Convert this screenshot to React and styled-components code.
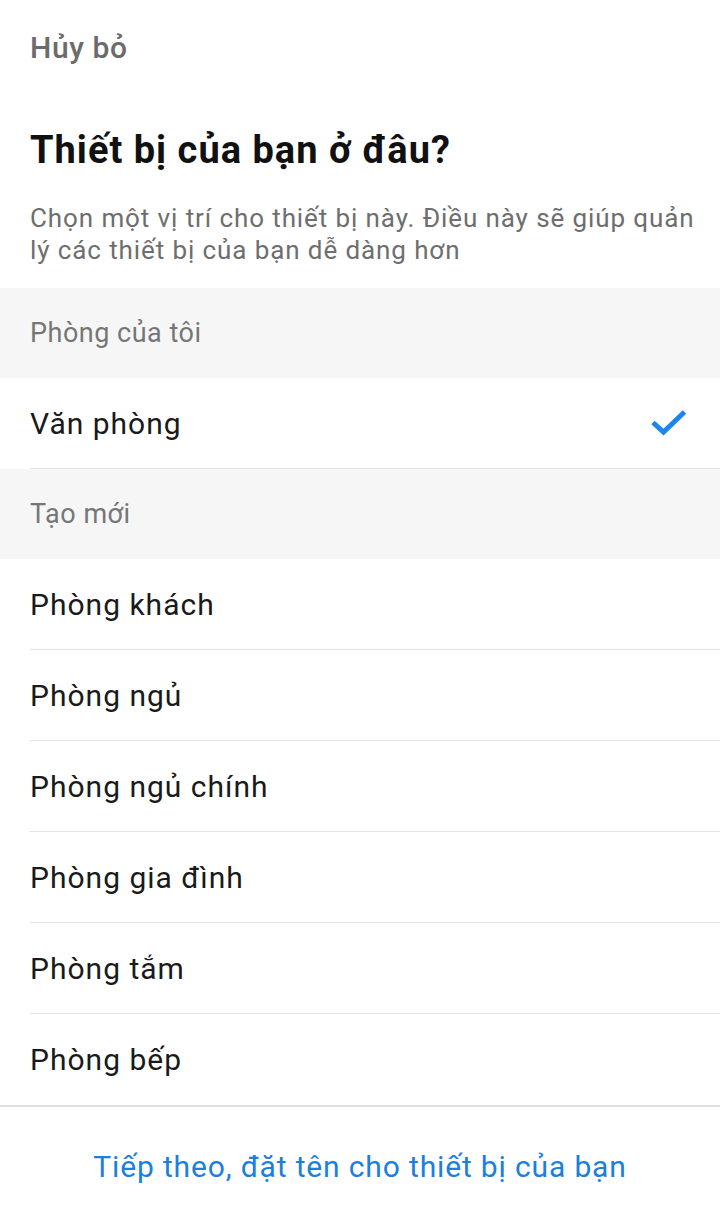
import React, { useState } from 'react'
import styled, { createGlobalStyle } from 'styled-components'

const GlobalStyle = createGlobalStyle`
  body {
    margin: 0;
    background: #ffffff;
    font-family: Roboto, "Noto Sans", sans-serif;
    -webkit-font-smoothing: antialiased;
  }
`

const Screen = styled.div`
  width: 720px;
  min-height: 1221px;
  display: flex;
  flex-direction: column;
  background: #ffffff;
`

const TopBar = styled.div`
  height: 96px;
  display: flex;
  align-items: center;
  padding: 0 30px;
  box-sizing: border-box;
`

const CancelButton = styled.button`
  border: none;
  background: none;
  padding: 0;
  margin-top: -2px;
  font-family: inherit;
  font-size: 30px;
  font-weight: 500;
  letter-spacing: 0.6px;
  color: #6b6b6b;
  cursor: pointer;
`

const Header = styled.div`
  padding: 28px 20px 22px 30px;
`

const Title = styled.h1`
  margin: 0;
  font-size: 38px;
  line-height: 52px;
  font-weight: 700;
  letter-spacing: 1px;
  color: #111111;
`

const Subtitle = styled.p`
  margin: 26px 0 0;
  font-size: 26px;
  line-height: 32px;
  letter-spacing: 0.9px;
  color: #6e6e6e;
`

const SectionHeader = styled.div`
  height: 90px;
  display: flex;
  align-items: center;
  padding: 0 30px;
  background: #f6f6f6;
  font-size: 27px;
  letter-spacing: 0.5px;
  color: #767676;
`

const Row = styled.div`
  height: 91px;
  display: flex;
  align-items: center;
  justify-content: space-between;
  margin-left: 30px;
  padding-right: 32px;
  border-bottom: ${({ $last }) => ($last ? 'none' : '1px solid #e4e4e4')};
  box-sizing: border-box;
  font-size: 30px;
  letter-spacing: 1px;
  color: #1a1a1a;
  cursor: pointer;
`

const Footer = styled.div`
  border-top: 2px solid #e0e0e0;
  height: 116px;
  display: flex;
  align-items: center;
  justify-content: center;
`

const NextButton = styled.button`
  border: none;
  background: none;
  padding: 0;
  margin-top: 2px;
  font-family: inherit;
  font-size: 30px;
  letter-spacing: 0.85px;
  color: #1a80dc;
  cursor: pointer;
`

const Check = () => (
  <svg width="38" height="30" viewBox="0 0 38 30">
    <path
      d="M3 14.5 L13.5 24 L34.5 4"
      fill="none"
      stroke="#1a86ee"
      strokeWidth="5"
    />
  </svg>
)

const myRooms = ['Văn phòng']
const newRooms = [
  'Phòng khách',
  'Phòng ngủ',
  'Phòng ngủ chính',
  'Phòng gia đình',
  'Phòng tắm',
  'Phòng bếp'
]

export default function App () {
  const [selected, setSelected] = useState('Văn phòng')

  return (
    <Screen>
      <GlobalStyle />
      <TopBar>
        <CancelButton>Hủy bỏ</CancelButton>
      </TopBar>
      <Header>
        <Title>Thiết bị của bạn ở đâu?</Title>
        <Subtitle>
          Chọn một vị trí cho thiết bị này. Điều này sẽ giúp quản lý các thiết
          bị của bạn dễ dàng hơn
        </Subtitle>
      </Header>

      <SectionHeader>Phòng của tôi</SectionHeader>
      {myRooms.map(room => (
        <Row key={room} onClick={() => setSelected(room)}>
          {room}
          {selected === room && <Check />}
        </Row>
      ))}

      <SectionHeader>Tạo mới</SectionHeader>
      {newRooms.map((room, i) => (
        <Row
          key={room}
          $last={i === newRooms.length - 1}
          onClick={() => setSelected(room)}
        >
          {room}
          {selected === room && <Check />}
        </Row>
      ))}

      <Footer>
        <NextButton>Tiếp theo, đặt tên cho thiết bị của bạn</NextButton>
      </Footer>
    </Screen>
  )
}
